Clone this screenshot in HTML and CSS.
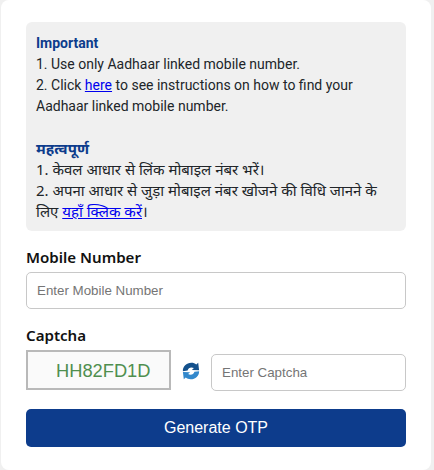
FILE: index.html
```html
<!DOCTYPE html>
<html lang="en">
<head>
    <meta charset="UTF-8">
    <meta name="viewport" content="width=device-width, initial-scale=1.0">
    <title>Generate OTP</title>
    <link rel="stylesheet" href="styles.css">
</head>
<body>

    <div class="card">
        <div class="notice">
            <div class="notice-title">Important</div>
            <div>1. Use only Aadhaar linked mobile number.</div>
            <div>2. Click <a href="#">here</a> to see instructions on how to find your Aadhaar linked mobile number.</div>
            <div class="notice-gap"></div>
            <div class="notice-title hindi">महत्वपूर्ण</div>
            <div class="hindi">1. केवल आधार से लिंक मोबाइल नंबर भरें।</div>
            <div class="hindi">2. अपना आधार से जुड़ा मोबाइल नंबर खोजने की विधि जानने के लिए <a href="#">यहाँ क्लिक करें</a>।</div>
        </div>

        <label class="field-label" for="mobile">Mobile Number</label>
        <input class="text-input" id="mobile" type="text" placeholder="Enter Mobile Number">

        <label class="field-label captcha-label" for="captcha">Captcha</label>
        <div class="captcha-row">
            <div class="captcha-box">HH82FD1D</div>
            <svg class="refresh-icon" viewBox="0 0 20 20" width="18" height="18">
                <path d="M1 10.4 C0.6 5 5 0.8 10.4 0.8 C12.6 0.8 14.4 1.5 15.8 2.7 L18 0.8 L19 9.2 L11 9 L13.2 6.8 C12.4 6.3 11.4 6 10.4 6 C8.4 6 6.8 7.4 6.2 9.4 Z" fill="#14518c"/>
                <path d="M19 10.2 C19.2 15.4 15 19.2 9.6 19.2 C7.4 19.2 5.6 18.5 4.2 17.3 L2 19.2 L1 11.2 L9 11.4 L6.8 13.4 C7.6 13.9 8.6 14.2 9.6 14.2 C11.6 14.2 13.2 12.8 13.8 10.8 Z" fill="#3288cc"/>
            </svg>
            <input class="text-input captcha-input" id="captcha" type="text" placeholder="Enter Captcha">
        </div>

        <button class="submit-btn">Generate OTP</button>
    </div>

</body>
</html>
```

FILE: styles.css
```css
/* General Styling */
body {
    margin: 0;
    background: #f0f0f0;
    font-family: 'Roboto', 'Noto Sans', sans-serif;
    color: #212529;
}

/* Card */
.card {
    box-sizing: border-box;
    width: 430px;
    height: 470px;
    margin-left: 1px;
    padding: 22px 25px 0;
    background: #fff;
    border-radius: 8px;
}

/* Notice box */
.notice {
    box-sizing: border-box;
    height: 209px;
    padding: 11px 10px;
    background: #f0f0f0;
    border-radius: 6px;
    font-size: 14px;
    line-height: 21px;
}

.hindi {
    font-family: 'Noto Sans', sans-serif;
    font-size: 15px;
}

.notice-title {
    color: #0d3c8c;
    font-weight: 700;
}

.notice-gap {
    height: 21px;
}

.notice a {
    color: #0000ee;
}

/* Form */
.field-label {
    display: block;
    margin-top: 15px;
    font-family: 'Noto Sans', sans-serif;
    font-size: 15.1px;
    font-weight: 600;
    line-height: 22px;
    color: #111;
}

.captcha-label {
    margin-top: 15px;
}

.text-input {
    display: block;
    box-sizing: border-box;
    width: 100%;
    height: 37px;
    margin-top: 4px;
    padding: 0 10px;
    background: #fff;
    border: 1px solid #c8c8c8;
    border-radius: 5px;
    font-family: 'Liberation Sans', Arial, sans-serif;
    font-size: 13.33px;
    outline: none;
}

.text-input::placeholder {
    color: #757575;
    opacity: 1;
}

.captcha-row {
    display: flex;
    align-items: flex-start;
    margin-top: 4px;
}

.captcha-box {
    box-sizing: border-box;
    flex: 0 0 145px;
    height: 40px;
    padding-left: 28px;
    background: #fafafa;
    border: 2px solid #b9b9b9;
    font-family: 'Liberation Sans', Arial, sans-serif;
    font-size: 18.3px;
    line-height: 38px;
    color: #4f8f4f;
}

.refresh-icon {
    margin: 12px 11px 0;
    flex-shrink: 0;
}

.captcha-input {
    flex: 1 1 0;
    min-width: 0;
    width: auto;
    margin-top: 4px;
}

.submit-btn {
    display: block;
    width: 100%;
    height: 38px;
    margin-top: 18px;
    background: #0d3c8c;
    border: none;
    border-radius: 5px;
    color: #fff;
    font-family: 'Liberation Sans', Arial, sans-serif;
    font-size: 16px;
}
```
